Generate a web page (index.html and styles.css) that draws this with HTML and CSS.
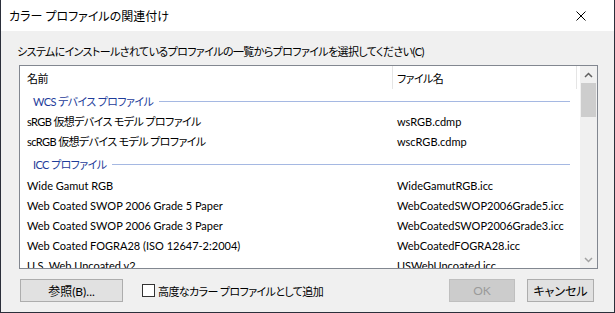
FILE: index.html
```html
<!DOCTYPE html>
<html lang="ja">
<head>
  <meta charset="UTF-8">
  <title>カラー プロファイルの関連付け</title>
  <link rel="stylesheet" href="styles.css">
</head>
<body>
  <div class="window">
    <div class="titlebar">
      <span class="title">カラー プロファイルの関連付け</span>
      <svg class="close" width="10" height="10" viewBox="0 0 10 10">
        <path d="M0.5 0.5 L9.5 9.5 M9.5 0.5 L0.5 9.5" stroke="#000" stroke-width="1" fill="none"/>
      </svg>
    </div>

    <div class="content">
      <div class="prompt ja">システムにインストールされているプロファイルの一覧からプロファイルを選択してください(C)</div>

      <!-- Profile list -->
      <div class="listbox">
        <div class="list">
          <div class="header ja">
            <div class="col1">名前</div>
            <div class="col2">ファイル名</div>
          </div>
          <div class="group first ja"><span>WCS デバイス プロファイル</span></div>
          <div class="row"><div class="col1 ja">sRGB 仮想デバイス モデル プロファイル</div><div class="col2">wsRGB.cdmp</div></div>
          <div class="row"><div class="col1 ja">scRGB 仮想デバイス モデル プロファイル</div><div class="col2">wscRGB.cdmp</div></div>
          <div class="group ja"><span>ICC プロファイル</span></div>
          <div class="row"><div class="col1">Wide Gamut RGB</div><div class="col2">WideGamutRGB.icc</div></div>
          <div class="row"><div class="col1">Web Coated SWOP 2006 Grade 5 Paper</div><div class="col2">WebCoatedSWOP2006Grade5.icc</div></div>
          <div class="row"><div class="col1">Web Coated SWOP 2006 Grade 3 Paper</div><div class="col2">WebCoatedSWOP2006Grade3.icc</div></div>
          <div class="row"><div class="col1">Web Coated FOGRA28 (ISO 12647-2:2004)</div><div class="col2">WebCoatedFOGRA28.icc</div></div>
          <div class="row"><div class="col1">U.S. Web Uncoated v2</div><div class="col2">USWebUncoated.icc</div></div>
        </div>
        <div class="scrollbar">
          <div class="arrow">
            <svg width="9" height="6" viewBox="0 0 9 6"><path d="M1 5 L4.5 1.5 L8 5" stroke="#606060" stroke-width="1.5" fill="none"/></svg>
          </div>
          <div class="track"><div class="thumb"></div></div>
          <div class="arrow">
            <svg width="9" height="6" viewBox="0 0 9 6"><path d="M1 1 L4.5 4.5 L8 1" stroke="#a3a3a3" stroke-width="1.5" fill="none"/></svg>
          </div>
        </div>
      </div>

      <!-- Buttons -->
      <div class="footer">
        <button class="btn browse">参照(B)...</button>
        <label class="check ja"><span class="box"></span>高度なカラー プロファイルとして追加</label>
        <span class="spacer"></span>
        <button class="btn ok" disabled>OK</button>
        <button class="btn cancel">キャンセル</button>
      </div>
    </div>
  </div>
</body>
</html>
```

FILE: styles.css
```css
body {
  margin: 0;
  font-family: Lato, "Noto Sans CJK JP", sans-serif;
  font-size: 11px;
  font-feature-settings: "palt";
  color: #000;
  background: #fff;
}

.ja {
  letter-spacing: -0.6px;
}

.window {
  width: 615px;
  height: 313px;
  box-sizing: border-box;
  border: 1px solid #2b2f3b;
  border-top: none;
  background: #f0f0f0;
  display: flex;
  flex-direction: column;
}

.titlebar {
  height: 31px;
  background: #fff;
  display: flex;
  align-items: center;
  justify-content: space-between;
  padding-left: 8px;
}

.title {
  font-size: 12px;
}

.close {
  margin-right: 28px;
}

.content {
  padding: 0 16px;
}

.prompt {
  margin-top: 13px;
  line-height: 16px;
  white-space: nowrap;
}

.listbox {
  margin: 5px 0 0 2px;
  height: 204px;
  box-sizing: border-box;
  border: 1px solid #828790;
  background: #fff;
  display: flex;
  overflow: hidden;
}

.list {
  flex: 1;
  overflow: hidden;
}

.header, .row {
  display: flex;
  white-space: nowrap;
}

.header {
  height: 24px;
  line-height: 26px;
}

.header .col2 {
  border-left: 1px solid #e5e5e5;
  border-right: 1px solid #e5e5e5;
  height: 23px;
}

.col1 {
  width: 365px;
  padding-left: 7px;
  overflow: hidden;
}

.col2 {
  width: 179px;
  padding-left: 4px;
}

.row .col2 {
  padding-left: 5px;
}

.row {
  height: 20px;
  line-height: 20px;
}

.group {
  height: 24px;
  display: flex;
  align-items: center;
  padding: 0 10px 0 13px;
  color: #1e3c9a;
  white-space: nowrap;
}

.group.first {
  height: 22px;
}

.group::after {
  content: "";
  flex: 1;
  height: 1px;
  margin-left: 6px;
  background: #a5b8e2;
}

.scrollbar {
  width: 17px;
  background: #f0f0f0;
  display: flex;
  flex-direction: column;
}

.arrow {
  height: 17px;
  display: flex;
  align-items: center;
  justify-content: center;
}

.track {
  flex: 1;
}

.thumb {
  margin: 0 1px;
  height: 34px;
  background: #cdcdcd;
}

.footer {
  display: flex;
  align-items: center;
  margin-top: 10px;
  padding: 0 4px 0 3px;
}

.btn {
  height: 23px;
  font-family: inherit;
  font-size: 12px;
  font-feature-settings: "palt";
  background: #e1e1e1;
  border: 1px solid #adadad;
  color: #000;
  padding: 0;
}

.browse {
  width: 103px;
}

.check {
  display: flex;
  align-items: center;
  margin-left: 19px;
}

.box {
  width: 13px;
  height: 13px;
  box-sizing: border-box;
  border: 1px solid #333;
  background: #fff;
  margin-right: 3px;
}

.spacer {
  flex: 1;
}

.ok {
  width: 66px;
  background: #cccccc;
  border-color: #bfbfbf;
  color: #9a9a9a;
}

.cancel {
  width: 67px;
  margin-left: 12px;
}
```
